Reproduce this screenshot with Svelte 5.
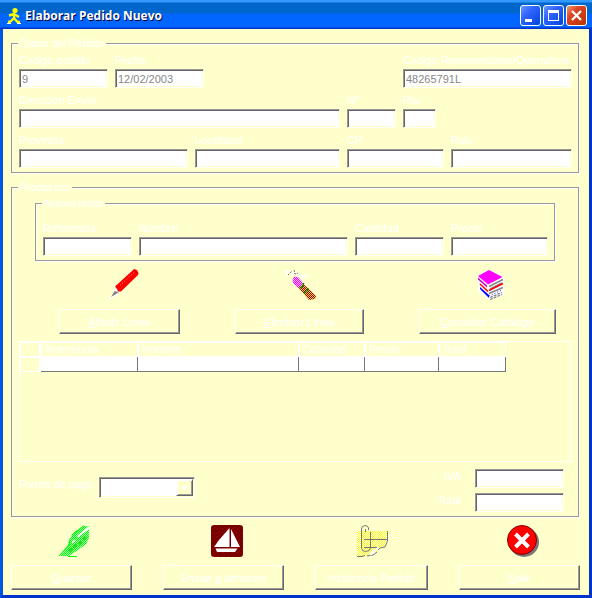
<script>
  const pedido = [
    { id: 'codigo', label: 'Codigo pedido', value: '9', cls: '' },
    { id: 'fecha', label: 'Fecha', value: '12/02/2003', cls: '' },
    { id: 'rep', label: 'Codigo Representante/Operadora', value: '48265791L', cls: 'last' }
  ];
  const envio = [
    { id: 'direccion', label: 'Dirección Envío' },
    { id: 'numero', label: 'Nº' },
    { id: 'pta', label: 'Pta' }
  ];
  const lugar = [
    { id: 'provincia', label: 'Provincia' },
    { id: 'localidad', label: 'Localidad' },
    { id: 'cp', label: 'CP' },
    { id: 'pais', label: 'País' }
  ];
  const linea = [
    { id: 'referencia', label: 'Referencia' },
    { id: 'nombre', label: 'Nombre' },
    { id: 'cantidad', label: 'Cantidad' },
    { id: 'precio', label: 'Precio' }
  ];
  const columnas = ['Referencia', 'Nombre', 'Cantidad', 'Precio', 'Total'];
</script>

{#snippet field(f)}
  <div class="field {f.cls ?? ''}">
    <label for={f.id}>{f.label}</label>
    <input id={f.id} type="text" value={f.value ?? ''} />
  </div>
{/snippet}

<div class="window">
  <header>
    <svg class="logo" width="16" height="18" viewBox="0 0 16 18" aria-hidden="true">
      <circle cx="9" cy="3.500" r="2.600" fill="#ff0" />
      <path d="M3 8.500 L8 7 L13 10 M8 7 L8 11 L11.500 15 L14 15 M8 11 L4.500 14.500 L2 15" fill="none" stroke="#ff0" stroke-width="2.400" stroke-linejoin="round" />
      <path d="M5 16.500 H1 M11 16.500 H15" stroke="#fff" stroke-width="1" />
    </svg>
    <h1>Elaborar Pedido Nuevo</h1>
    <div class="controls">
      <button aria-label="Minimizar"><svg width="19" height="19" viewBox="0 0 19 19"><path d="M4 13h7v3H4z" fill="#fff" /></svg></button>
      <button aria-label="Maximizar"><svg width="19" height="19" viewBox="0 0 19 19"><path d="M4 4h11v11H4zM5 7v7h9V7z" fill="#fff" fill-rule="evenodd" /></svg></button>
      <button class="close" aria-label="Cerrar"><svg width="19" height="19" viewBox="0 0 19 19"><path d="M5 5l9 9M14 5l-9 9" stroke="#fff" stroke-width="2.300" /></svg></button>
    </div>
  </header>

  <main>
    <fieldset class="datos">
      <legend>Datos del Pedido</legend>
      <div class="row r1">{#each pedido as f}{@render field(f)}{/each}</div>
      <div class="row r2">{#each envio as f}{@render field(f)}{/each}</div>
      <div class="row r3">{#each lugar as f}{@render field(f)}{/each}</div>
    </fieldset>

    <fieldset class="productos">
      <legend>Productos</legend>
      <fieldset class="nueva">
        <legend>Nueva línea</legend>
        <div class="row r4">{#each linea as f}{@render field(f)}{/each}</div>
      </fieldset>

      <div class="actions lines">
        <div class="action w121">
          <svg width="38" height="32" viewBox="-6 0 38 32" aria-hidden="true">
            <path d="M9 17.500 L6.500 23 L0.500 31.500 L9.500 26 L14 22z" fill="#fff" />
            <path d="M4 28 L7.500 22 L12 23 L8.500 25.500z" fill="#888" />
            <path d="M8 17.500 L26 1 L27 0 L30 1 L31.500 4 L31 6 L14 22.500 L11 22.500 L10 20z" fill="#f00" />
            <path d="M27 1 L30.500 4.500" fill="none" stroke="#900" stroke-dasharray="1 1" />
            <path d="M13 16.500 L27 3.500" stroke="#fff" stroke-width="0.600" stroke-dasharray="1 2" />
          </svg>
          <button><span><u>A</u>ñadir Línea</span></button>
        </div>
        <div class="action w129">
          <svg width="32" height="32" viewBox="0 0 32 32" aria-hidden="true">
            <defs>
              <pattern id="pink" width="2" height="2" patternUnits="userSpaceOnUse"><path d="M0 0h2v2H0z" fill="#fbf" /><path d="M0 0h1v1H0zM1 1h1v1H1z" fill="#f0f" /></pattern>
              <pattern id="gold" width="2" height="2" patternUnits="userSpaceOnUse"><path d="M0 0h2v2H0z" fill="#fc3" /><path d="M0 0h1v1H0zM1 1h1v1H1z" fill="#900" /></pattern>
            </defs>
            <path d="M0 2 L4 3 L3 6 L8 2 L10 3 L8 6 L13 4 L16 5 L14 8 L20 6 L18 9 L25 6" fill="none" stroke="#fff" stroke-width="1.300" />
            <path d="M4 6 L8 2 M10 1 L11 5 L14 4" fill="none" stroke="#776" stroke-dasharray="2 1" />
            <path d="M14 18 L18 14 L27 22 L32 27 L31 30 L25 31z" fill="url(#gold)" />
            <path d="M15.500 19 L19 17 L19.500 14 M20 24.500 L23.500 21.500 L24 19" fill="none" stroke="#080" stroke-width="1.400" />
            <path d="M8.500 11 L10 7.500 L14 8 L18.500 13 L18 16 L14 19 L9 14z" fill="url(#pink)" />
          </svg>
          <button><span><u>E</u>liminar Línea</span></button>
        </div>
        <div class="action w137">
          <svg width="38" height="32" viewBox="-6 0 38 32" aria-hidden="true">
            <path d="M2.500 7 L14 0.500 L29 8 V26 L15 31.500 L4 24z" fill="#fff" />
            <path d="M3 7 L14 1 L27.500 8 L13 15.500z" fill="#f0f" />
            <path d="M3 8.500 L12 16.500 V18.500 L3 10.500z" fill="#c0c" />
            <path d="M14 17.500 L28 10.500 M15 20 L27 14" stroke="#888" stroke-width="1.700" />
            <path d="M14 21.500 L28 14.500 M5 15 L13 22.500" stroke="#f00" stroke-width="1.500" />
            <path d="M14 24.500 L28 18.500" stroke="#888" stroke-width="1.700" />
            <path d="M5 20 L14 29 V26 L5 18z" fill="#00f" />
            <path d="M14 27 L27 21" stroke="#22f" stroke-dasharray="1 2" />
            <path d="M15 30.500 L27 25.500 M15 28.500 L27 23.500" stroke="#888" stroke-width="1.300" stroke-dasharray="3 1" />
          </svg>
          <button><span><u>C</u>onsultar Catálogo</span></button>
        </div>
      </div>

      <div class="grid">
        <table>
          <colgroup><col class="c0" /><col class="c1" /><col class="c2" /><col class="c3" /><col class="c4" /><col class="c5" /></colgroup>
          <thead><tr><th></th>{#each columnas as c}<th scope="col">{c}</th>{/each}</tr></thead>
          <tbody><tr><th></th>{#each columnas as c}<td></td>{/each}</tr></tbody>
        </table>
      </div>

      <div class="totals">
        <div class="pay">
          <label for="pago">Forma de pago</label>
          <div class="combo">
            <select id="pago"><option></option></select>
            <span class="arrow"><svg width="7" height="4" viewBox="0 0 7 4" aria-hidden="true"><path d="M0 0h7L3.500 4z" fill="#fff" /></svg></span>
          </div>
        </div>
        <div class="sums">
          <label for="iva">IVA</label><input id="iva" type="text" />
          <label for="total">Total</label><input id="total" type="text" />
        </div>
      </div>
    </fieldset>

    <div class="actions">
      <div class="action w121">
        <svg width="38" height="32" viewBox="-6 0 38 32" aria-hidden="true">
          <defs><pattern id="green" width="2" height="2" patternUnits="userSpaceOnUse"><path d="M0 0h2v2H0z" fill="#afa" /><path d="M0 0h1v1H0zM1 1h1v1H1z" fill="#0f0" /></pattern></defs>
          <path d="M0 31 L9 20 L10 15 L14 8 L24 1 L30 1 V13 L27 19 L19 25 L10 31z" fill="url(#green)" />
          <path d="M0 31 L10 20 L11 15 M13 10 L25 0.500" fill="none" stroke="#0f0" />
          <path d="M18 11 L30 1 V4 L19 12.500z M13 16l3-1v2l-3 1z" fill="#fff" />
          <path d="M10 26 L16 21 L22 17 L28 10" fill="none" stroke="#2d2" stroke-width="3" stroke-dasharray="4 2" />
          <path d="M9 31.500h9" stroke="#0f0" />
        </svg>
        <button><span><u>G</u>uardar</span></button>
      </div>
      <div class="action w121">
        <svg width="38" height="32" viewBox="-6 0 38 32" aria-hidden="true">
          <defs><pattern id="maroon" width="5" height="4" patternUnits="userSpaceOnUse"><path d="M0 0h5v4H0z" fill="#700000" /><path d="M0 0h2v1H0zM3 1h1v2H3zM1 3h2v1H1z" fill="#980000" /></pattern></defs>
          <rect width="32" height="32" rx="3" fill="url(#maroon)" />
          <path d="M18.500 3 V22 H3 L8 15z M20 4 L29 22 H20z M4.500 23.500 H26.500 L24 27 H6z" fill="#fff" />
        </svg>
        <button><span>Enviar <u>a</u> almacén</span></button>
      </div>
      <div class="action w113">
        <svg width="32" height="32" viewBox="0 0 32 32" aria-hidden="true">
          <defs><pattern id="paper" width="2" height="2" patternUnits="userSpaceOnUse"><path d="M0 0h2v2H0z" fill="#fff" /><path d="M0 0h1v1H0zM1 1h1v1H1z" fill="#ff0" /></pattern></defs>
          <path d="M1 6 H31 V16 L29 22 L23 23 L21 27 L16 28 L14 31 L1 31.500z" fill="url(#paper)" />
          <path d="M1 31.500 H6 L9 30.500 M11 31 L17 30 L21 27 M22 25 L24 23 L29 22 L31.500 16 V6" fill="none" stroke="#777" />
          <path d="M22 23 L17 27 L14 30" fill="none" stroke="#fff" stroke-width="2" />
          <path d="M8 14.500 H31 M8 22.500 H21" stroke="#777" />
          <path d="M12.500 5 V3 Q12 0.500 9 0.500 Q5.500 1 5.500 4 V23 Q6 26.500 9.500 26.500 Q14 26.500 14.500 23 V7 M9.500 4 V7" fill="none" stroke="#777" />
        </svg>
        <button><span>Incidencia Pedido</span></button>
      </div>
      <div class="action w121">
        <svg width="38" height="32" viewBox="-6 0 38 32" aria-hidden="true">
          <circle cx="17" cy="17" r="15" fill="#777" />
          <circle cx="15" cy="15" r="14.500" fill="#f00" stroke="#800000" />
          <path d="M8.500 9 L21.500 22 M21.500 9 L8.500 22" stroke="#fff" stroke-width="4" />
        </svg>
        <button><span><u>S</u>alir</span></button>
      </div>
    </div>
  </main>
</div>

<style>
  :global(body) { margin: 0; background: #ffffcc; }
  .window {
    box-sizing: border-box;
    background: #ffffcc;
    color: #fff;
    font: 11px/16px "Liberation Sans", Arial, sans-serif;
  }
  header {
    display: flex;
    align-items: center;
    height: 29px;
    box-sizing: border-box;
    padding: 3px 5px 1px 6px;
    background: linear-gradient(#3399ff 0 2px, #0066cc 3px 13px, #0066ff 14px 27px, #0033cc 28px);
  }
  .logo { margin-right: 3px; }
  h1 {
    flex: 1;
    margin: 0;
    font: bold 12px/16px "Open Sans", "Noto Sans", sans-serif;
    text-shadow: 1px 1px #003;
  }
  .controls { display: flex; gap: 2px; }
  .controls button {
    display: block;
    width: 21px;
    height: 21px;
    padding: 0;
    border: 1px solid #fff;
    border-radius: 3px;
    background: linear-gradient(135deg, #6699ff, #3366ff 35%, #0044dd);
  }
  .controls button.close { background: linear-gradient(135deg, #ee9977, #dd4422 35%, #bb3300); }
  .controls svg { display: block; }

  main {
    padding: 9px 9px 5px 8px;
    border: solid #0033cc;
    border-width: 0 3px 3px;
    border-left-color: #0055e5;
  }
  fieldset {
    min-width: 0;
    margin: 0 1px 0 0;
    padding: 4px 6px 4px 7px;
    border: 1px solid #999;
    box-shadow: 1px 1px #fff, inset 1px 1px #fff;
  }
  legend {
    height: 11px;
    line-height: 11px;
    padding: 0 2px;
    margin-left: -1px;
    background: #ffffcc;
  }
  .productos { margin-top: 9px; padding-top: 5px; }
  .nueva { margin: 0 17px 0 16px; padding-top: 12px; }
  .row { display: grid; gap: 7px; }
  .row + .row { margin-top: 5px; }
  .r1 { grid-template-columns: 89fr 89fr 185fr 169fr; }
  .r2 { grid-template-columns: 321fr 49fr 33fr 129fr; }
  .r3 { grid-template-columns: 169fr 145fr 97fr 121fr; }
  .r4 { grid-template-columns: 89fr 209fr 89fr 97fr; }
  .last { grid-column: 4; }
  .field { min-width: 0; }
  label { display: block; height: 16px; line-height: 14px; white-space: nowrap; }
  input, select {
    display: block;
    box-sizing: border-box;
    width: 100%;
    height: 19px;
    margin: 0;
    padding: 0 2px;
    border: 1px solid;
    border-color: #999 #fff #fff #999;
    border-radius: 0;
    background: #fff;
    box-shadow: inset 1px 1px #666, inset -1px -1px #ffffcc;
    color: #888;
    font: inherit;
    outline: none;
  }

  .actions { display: flex; justify-content: space-between; margin-top: 8px; }
  .lines { padding: 0 16px 0 40px; }
  .action { display: flex; flex-direction: column; align-items: center; gap: 8px; }
  .action svg { display: block; }
  .action button {
    width: 100%;
    height: 25px;
    padding: 0;
    border: 1px solid;
    border-color: #fff #666 #666 #fff;
    background: #ffffcc;
    box-shadow: inset -1px -1px #999;
    color: #fff;
    font: inherit;
  }
  .w113 { width: 113px; }
  .w121 { width: 121px; }
  .w129 { width: 129px; }
  .w137 { width: 137px; }

  .grid {
    box-sizing: border-box;
    height: 121px;
    margin-top: 7px;
    border: 1px solid #fff;
  }
  table { table-layout: fixed; width: 486px; border-collapse: separate; border-spacing: 0; }
  .c0 { width: 21px; }
  .c1 { width: 97px; }
  .c2 { width: 161px; }
  .c3 { width: 66px; }
  .c4 { width: 74px; }
  .c5 { width: 67px; }
  th, td { box-sizing: border-box; height: 15px; padding: 0; }
  th {
    border: solid #fff;
    border-width: 1px 1px 1px 0;
    padding-left: 3px;
    font-weight: normal;
    line-height: 13px;
    text-align: left;
  }
  th + th { border-left-width: 1px; }
  th:first-child { border-left-width: 1px; border-right-width: 2px; padding: 0; }
  td { background: #fff; border: solid #777; border-width: 0 1px 1px 0; }

  .totals { display: flex; justify-content: space-between; margin-top: 7px; }
  .pay { display: flex; padding-top: 8px; }
  .pay label { width: 80px; }
  .combo { position: relative; width: 96px; height: 21px; }
  .combo select { height: 21px; appearance: none; }
  .arrow {
    position: absolute;
    top: 2px;
    right: 2px;
    display: grid;
    place-items: center;
    box-sizing: border-box;
    width: 17px;
    height: 17px;
    border: 1px solid;
    border-color: #fff #666 #666 #fff;
    background: #ffffcc;
    box-shadow: inset 1px 1px #fff, inset -1px -1px #999;
    pointer-events: none;
  }
  .sums {
    display: grid;
    grid-template-columns: auto 89px;
    gap: 5px 14px;
    padding-right: 8px;
    text-align: right;
  }
</style>
